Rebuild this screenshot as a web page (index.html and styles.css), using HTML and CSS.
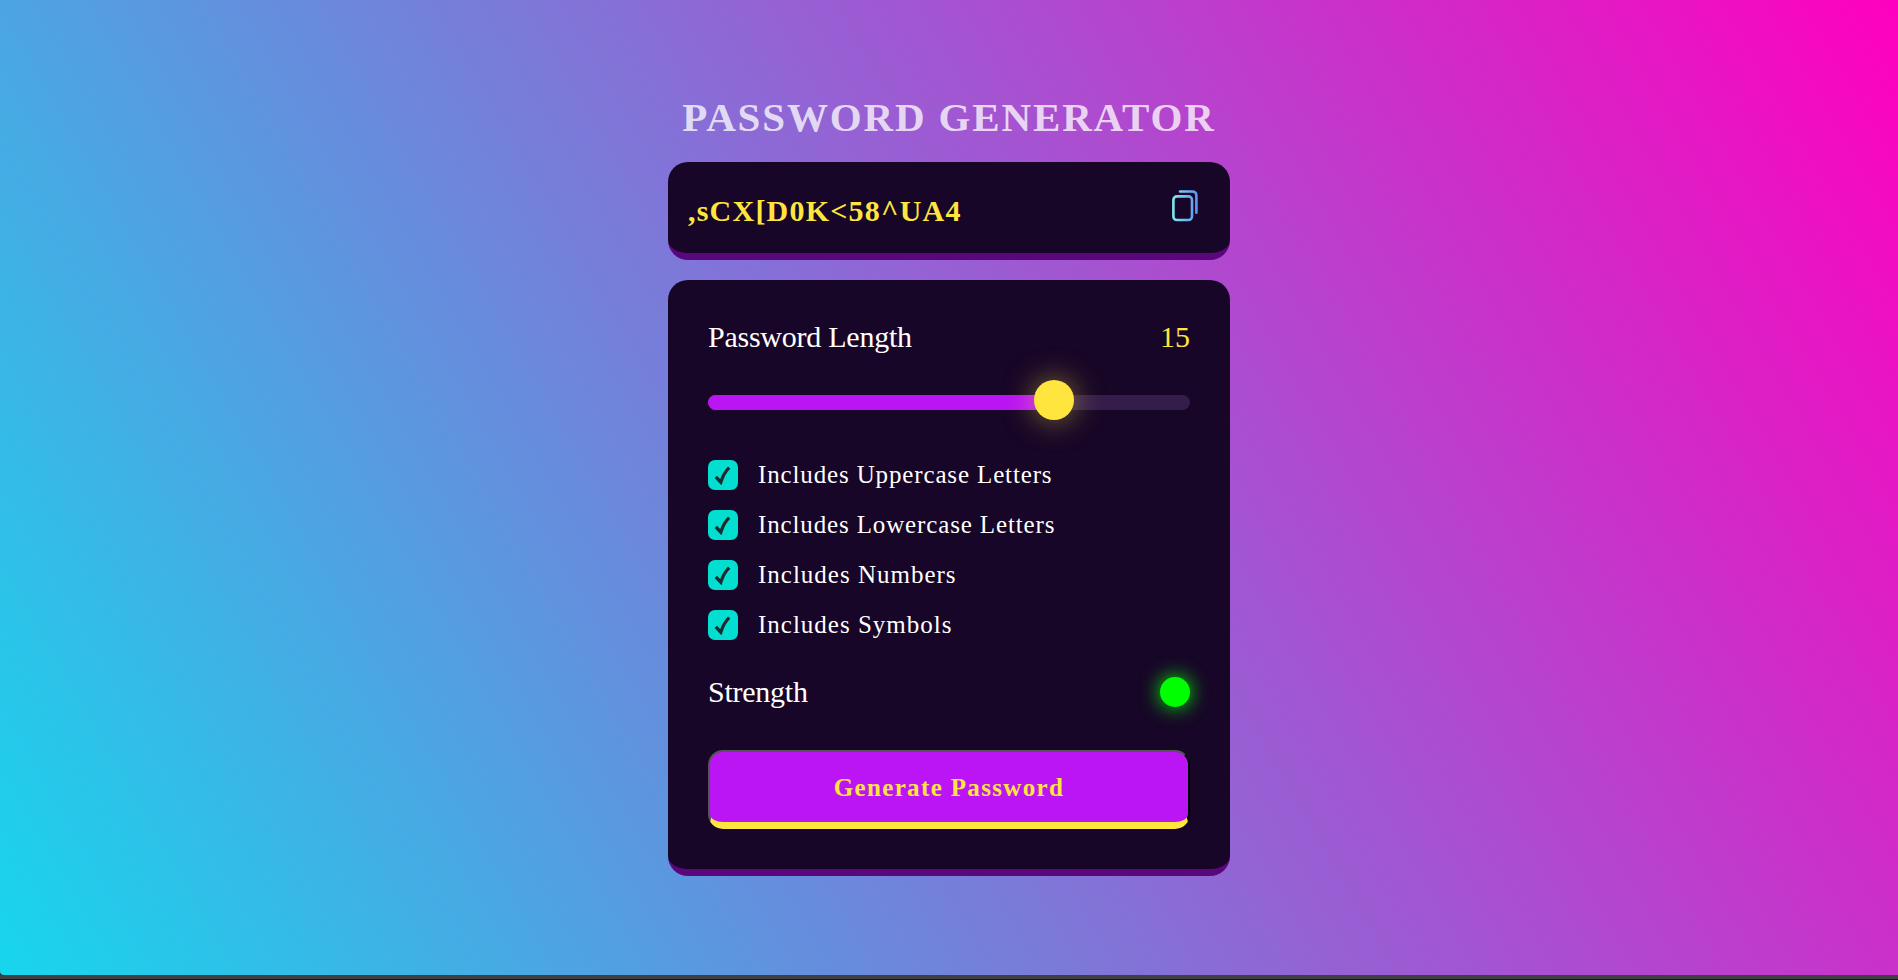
FILE: index.html
```html
<!DOCTYPE html>
<html lang="en">
<head>
<meta charset="utf-8">
<title>Password Generator</title>
<link rel="stylesheet" href="styles.css">
</head>
<body>
<main class="page">
  <div class="container">
    <h1 class="title">Password Generator</h1>
    <div class="display">
      <span class="password">,sCX[D0K&lt;58^UA4</span>
      <svg class="copy" width="28" height="34" viewBox="0 0 28 34" fill="none" stroke="url(#ink)" stroke-width="2.6" stroke-linecap="round">
        <defs><linearGradient id="ink" gradientUnits="userSpaceOnUse" x1="1" y1="16" x2="27" y2="16"><stop offset="0" stop-color="#80eef0"/><stop offset="1" stop-color="#5f94f4"/></linearGradient></defs>
        <rect x="3.4" y="7.4" width="18.6" height="23.6" rx="3.5"/>
        <path d="M10 2.5H22.2Q26.4 2.5 26.4 6.7V23.7"/>
      </svg>
    </div>
    <section class="card">
      <div class="row"><span class="label">Password Length</span><span class="number">15</span></div>
      <div class="slider"><div class="track"><div class="fill"></div></div><div class="thumb"></div></div>
      <div class="checks">
        <div class="check"><span class="box"><svg width="18" height="20" viewBox="0 0 18 20"><path d="M1.8 11.8L6.8 17.2C8.6 11.5 11 6.5 15.2 2.6" fill="none" stroke="#1f2a30" stroke-width="3.3"/></svg></span><span class="option option-long">Includes Uppercase Letters</span></div>
        <div class="check"><span class="box"><svg width="18" height="20" viewBox="0 0 18 20"><path d="M1.8 11.8L6.8 17.2C8.6 11.5 11 6.5 15.2 2.6" fill="none" stroke="#1f2a30" stroke-width="3.3"/></svg></span><span class="option option-long">Includes Lowercase Letters</span></div>
        <div class="check"><span class="box"><svg width="18" height="20" viewBox="0 0 18 20"><path d="M1.8 11.8L6.8 17.2C8.6 11.5 11 6.5 15.2 2.6" fill="none" stroke="#1f2a30" stroke-width="3.3"/></svg></span><span class="option">Includes Numbers</span></div>
        <div class="check"><span class="box"><svg width="18" height="20" viewBox="0 0 18 20"><path d="M1.8 11.8L6.8 17.2C8.6 11.5 11 6.5 15.2 2.6" fill="none" stroke="#1f2a30" stroke-width="3.3"/></svg></span><span class="option">Includes Symbols</span></div>
      </div>
      <div class="row strength"><span class="label">Strength</span><span class="indicator"></span></div>
      <button class="generate">Generate Password</button>
    </section>
  </div>
</main>
<footer class="edge"></footer>
</body>
</html>
```
FILE: styles.css
```css
* { box-sizing: border-box; }
body {
  margin: 0;
  height: 980px;
  overflow: hidden;
  background: #2b2930;
  font-family: "Liberation Serif", "Times New Roman", serif;
  color: #fff;
}
.page {
  height: 975px;
  display: flex;
  justify-content: center;
  border-bottom-left-radius: 4px;
  background: linear-gradient(60deg, #17d6ed, #ff00bf);
}
.edge { height: 5px; background: linear-gradient(#404043 0 4px, #17121d 4px); }
.container { width: 562px; padding-top: 94px; }
.title {
  margin: 0 0 22px;
  height: 46px;
  line-height: 46px;
  font-size: 41px;
  letter-spacing: 1.85px;
  text-align: center;
  text-transform: uppercase;
  white-space: nowrap;
  color: rgba(255, 255, 255, .77);
}
.display {
  height: 98px;
  padding: 0 32px 0 20px;
  display: flex;
  justify-content: space-between;
  border-radius: 20px;
  border-bottom: 7px solid #5a077c;
  background: #170627;
}
.password {
  font-size: 30px;
  font-weight: 700;
  line-height: 34px;
  padding-top: 32px;
  letter-spacing: 1.22px;
  color: #ffe53d;
}
.copy { margin-top: 27px; }
.card {
  margin-top: 20px;
  height: 596px;
  padding: 40px;
  border-radius: 20px;
  border-bottom: 7px solid #5a077c;
  background: #170627;
}
.row { display: flex; justify-content: space-between; height: 34px; line-height: 34px; font-size: 30px; }
.label { letter-spacing: -.25px; }
.number { color: #ffe53d; }
.slider { position: relative; margin-top: 41px; height: 15px; }
.track { height: 15px; border-radius: 8px; overflow: hidden; background: #351d4b; }
.fill { width: 346px; height: 100%; background: #bb14f5; }
.thumb {
  position: absolute;
  left: 326px;
  top: -15px;
  width: 40px;
  height: 40px;
  border-radius: 50%;
  background: #ffe53d;
  box-shadow: 0 0 30px rgba(255, 229, 61, .5);
}
.checks { margin-top: 50px; display: grid; gap: 20px; }
.check { display: flex; align-items: center; gap: 20px; height: 30px; }
.box { width: 30px; height: 30px; border-radius: 7px; display: flex; align-items: center; justify-content: center; background: #02dfd1; }
.option { font-size: 25px; line-height: 30px; letter-spacing: 1px; }
.option-long { letter-spacing: .86px; }
.strength { margin-top: 35px; }
.indicator { width: 30px; height: 30px; margin-top: 2px; border-radius: 50%; background: #0f0; box-shadow: 0 0 20px #0f0; }
.generate {
  display: block;
  width: 482px;
  height: 79px;
  margin-top: 41px;
  padding: 1px 0 0;
  border-style: outset;
  border-width: 2px 2px 7px;
  border-color: #555 #000 #ffe53d #555;
  border-bottom-style: solid;
  border-radius: 15px;
  background: #bb14f5;
  color: #ffe53d;
  font: 700 25px/30px "Liberation Serif", serif;
  letter-spacing: 1.35px;
}
```
